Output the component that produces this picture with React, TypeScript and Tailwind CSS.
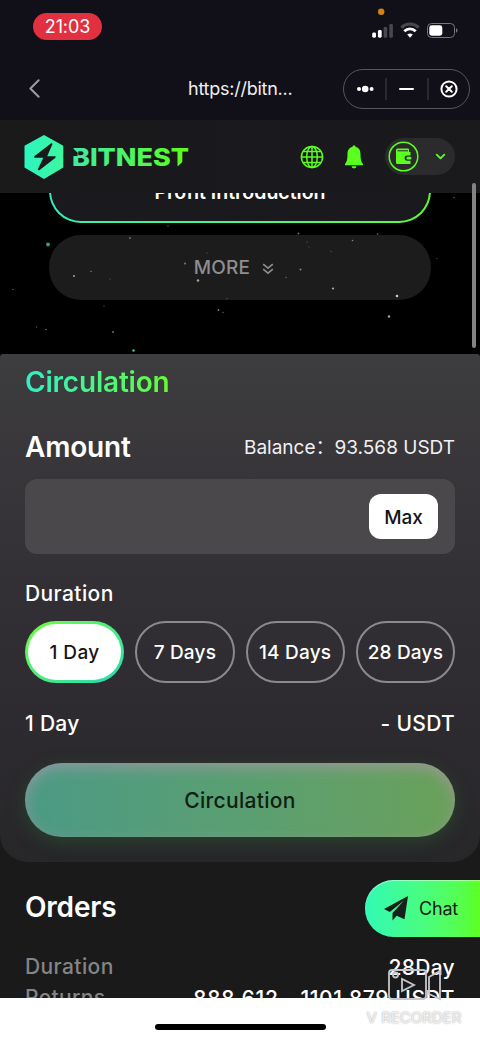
import { ChevronDown, ChevronLeft } from 'lucide-react';

interface Star {
  x: number;
  y: number;
  r: number;
  color: string;
}

// Coordinates are relative to the hero area
const stars: Star[] = [
  { x: 48, y: 50.5, r: 1.9, color: '#2fa866' },
  { x: 133.5, y: 156.5, r: 1.2, color: '#4fc0a8' },
  { x: 130, y: 44, r: 0.9, color: '#777' },
  { x: 168, y: 32, r: 0.8, color: '#555' },
  { x: 298.5, y: 39.5, r: 0.9, color: '#777' },
  { x: 377.5, y: 40, r: 0.8, color: '#777' },
  { x: 352.5, y: 46.5, r: 0.8, color: '#888' },
  { x: 307, y: 48, r: 0.7, color: '#555' },
  { x: 309, y: 53, r: 0.7, color: '#444' },
  { x: 331, y: 57.5, r: 0.7, color: '#555' },
  { x: 207, y: 59, r: 0.7, color: '#555' },
  { x: 185, y: 69.5, r: 0.9, color: '#888' },
  { x: 74, y: 82, r: 1.1, color: '#999' },
  { x: 91, y: 77.5, r: 0.8, color: '#777' },
  { x: 110, y: 85, r: 0.7, color: '#555' },
  { x: 198, y: 86.5, r: 1.2, color: '#aaa' },
  { x: 300.5, y: 75.5, r: 1, color: '#888' },
  { x: 286, y: 83.5, r: 0.8, color: '#666' },
  { x: 333, y: 94.5, r: 1.1, color: '#aaa' },
  { x: 397, y: 102, r: 1.3, color: '#ccc' },
  { x: 389, y: 122.5, r: 1.2, color: '#aaa' },
  { x: 227, y: 104.5, r: 0.7, color: '#555' },
  { x: 218.5, y: 116, r: 0.9, color: '#888' },
  { x: 223, y: 118.5, r: 0.7, color: '#666' },
  { x: 113, y: 138, r: 0.9, color: '#777' },
  { x: 46, y: 135.5, r: 0.7, color: '#888' },
  { x: 36.5, y: 133, r: 0.7, color: '#555' },
  { x: 13, y: 95.5, r: 0.8, color: '#555' },
  { x: 104, y: 112, r: 0.7, color: '#444' },
  { x: 437, y: 64.5, r: 0.7, color: '#444' },
  { x: 454, y: 3.5, r: 0.8, color: '#555' },
];

const durations = ['1 Day', '7 Days', '14 Days', '28 Days'];

const StatusBar = () => (
  <div className="relative flex h-14 shrink-0 items-start justify-between pl-[33px] pr-[22px] pt-[13px]">
    <div className="flex h-[27px] w-[69px] items-center justify-center rounded-full bg-[#e13040] text-[18px] tracking-[-0.1px] text-white">
      21:03
    </div>
    <svg className="absolute left-[371px] top-[7px]" width="90" height="34" viewBox="0 0 90 34">
      <circle cx="10.2" cy="4.7" r="3.2" fill="#d2820f" />
      <rect x="1.2" y="25.5" width="3.8" height="5.2" rx="1.4" fill="#fff" />
      <rect x="6.9" y="23" width="3.8" height="7.7" rx="1.4" fill="#fff" />
      <rect x="12.6" y="20" width="3.6" height="10.7" rx="1.2" fill="#48474d" />
      <rect x="18.3" y="17" width="3.6" height="13.7" rx="1.2" fill="#48474d" />
      <path d="M30.300 20.600a12.500 12.500 0 0 1 17.400 0" fill="none" stroke="#48474d" strokeWidth="3" />
      <path d="M33.300 24.300a8 8 0 0 1 11.400 0" fill="none" stroke="#fff" strokeWidth="2.800" />
      <path d="M36.200 27.600a4.500 4.500 0 0 1 5.600 0l-2.800 3.200z" fill="#fff" />
      <rect x="56.5" y="16.5" width="27" height="14" rx="4" fill="none" stroke="#77767b" />
      <rect x="58.3" y="18.3" width="13" height="10.4" rx="2.4" fill="#fff" />
      <path d="M85 21.300c2 .7 2 3.700 0 4.400z" fill="#77767b" />
    </svg>
  </div>
);

const BrowserBar = () => (
  <div className="flex h-16 shrink-0 items-center pl-[18px] pr-[10px] pt-[1px]">
    <ChevronLeft className="h-[33px] w-[33px] text-[#9a99a0]" strokeWidth={1.5} />
    <span className="ml-[137px] text-[18px] tracking-[-0.25px] text-[#f0f0f2]">https://bitn...</span>
    <div className="ml-auto flex h-10 w-[127px] items-center rounded-full border border-[#57555d]">
      <svg width="125" height="38" viewBox="0 0 125 38">
        <circle cx="15" cy="19" r="2" fill="#fff" />
        <circle cx="21.2" cy="19" r="3.3" fill="#fff" />
        <circle cx="27.6" cy="19" r="2" fill="#fff" />
        <path d="M42 8v22M84 8v22" stroke="#45434b" />
        <path d="M56 19h13" stroke="#fff" strokeWidth="2" strokeLinecap="round" />
        <circle cx="105" cy="19" r="7.6" fill="none" stroke="#fff" strokeWidth="2" />
        <path d="M102.200 16.200l5.600 5.600m0-5.600l-5.600 5.600" stroke="#fff" strokeWidth="2" strokeLinecap="round" />
      </svg>
    </div>
  </div>
);

const Logo = () => (
  <svg width="168" height="46" viewBox="0 0 168 46">
    <defs>
      <linearGradient id="logo" x1="0" y1="0" x2="1" y2="0">
        <stop offset="0" stopColor="#2df5c0" />
        <stop offset="1" stopColor="#3df7a0" />
      </linearGradient>
      <linearGradient id="wordmark" x1="0" y1="0" x2="1" y2="0">
        <stop offset="0" stopColor="#3feaa4" />
        <stop offset="0.5" stopColor="#4df660" />
        <stop offset="1" stopColor="#5bff16" />
      </linearGradient>
    </defs>
    <path d="M20 1l19.300 10.800v21.600L20 45 .5 33.400V11.800z" fill="url(#logo)" />
    <path d="M27.500 9L10.300 22.300v1.500h9L13.700 35.500 15 36.500 31.500 23.800v-1.500h-8.300L28.500 10z" fill="#1a1a1c" />
    <text
      x="48"
      y="31.5"
      textLength="117"
      lengthAdjust="spacingAndGlyphs"
      fill="url(#wordmark)"
      className="text-[24px] font-extrabold"
    >
      BITNEST
    </text>
    {/* angled cuts in the B and the two T stems */}
    <path d="M48 13.500l6.500 6H48zM48 19h5.500v3H48zM82 32l6-5.500V32zM154 32l6-5.500V32z" fill="#19191d" />
  </svg>
);

const AppHeader = () => (
  <header className="flex h-[73px] shrink-0 items-center justify-between bg-gradient-to-r from-[#1a1a1a] via-[#19191e] to-[#1a1a1c] pl-6 pr-[25px]">
    <Logo />
    <div className="flex items-center">
      <svg width="24" height="24" viewBox="0 0 24 24" fill="none" stroke="#5aff1e" strokeWidth="1.500">
        <circle cx="12" cy="12" r="10.600" />
        <ellipse cx="12" cy="12" rx="5.300" ry="10.600" />
        <path d="M12 1.400v21.200M1.400 12h21.200M3.500 6.500h17M3.500 17.500h17" />
      </svg>
      <svg className="ml-[20px]" width="20" height="24" viewBox="0 0 20 24" fill="#5aff1e">
        <path d="M8.500 1.800a1.500 1.500 0 0 1 3 0C15 2.700 16.500 5.500 16.500 9c0 6 .8 8 2.500 10v1.300H1V19c1.700-2 2.500-4 2.500-10 0-3.500 1.500-6.300 5-7.200zM7.500 21.300h5a2.500 2.100 0 0 1-5 0z" />
      </svg>
      <div className="ml-[21px] flex h-[37px] w-[70px] items-center rounded-full bg-[#2b2b2d] pl-[3px]">
        <svg width="31" height="31" viewBox="0 0 31 31">
          <circle cx="15.500" cy="15.500" r="14.300" fill="none" stroke="#5aff1e" strokeWidth="1.500" />
          <path d="M8 9a1.500 1.500 0 0 1 1.500-1.500H20a1 1 0 0 1 1 1V11h1.500v3.500h-3.300a2.600 2.600 0 0 0 0 5.200h3.300V23H9.500A1.500 1.500 0 0 1 8 21.500z" fill="#5aff1e" />
          <path d="M9.500 9.800H20" stroke="#2b2b2d" />
          <rect x="18.500" y="15.700" width="4.900" height="2.900" rx="1.400" fill="#5aff1e" />
        </svg>
        <ChevronDown className="ml-[14px] h-[15px] w-[15px] text-[#5aff1e]" strokeWidth={3} />
      </div>
    </div>
  </header>
);

const Hero = () => (
  <section className="relative h-[161px] shrink-0 overflow-hidden bg-black px-[49px]">
    <div className="-mt-[34px] h-16 rounded-[32px] bg-gradient-to-r from-[#35edb8] to-[#5aff25] p-[2px]">
      <div className="flex h-full items-center justify-center rounded-[30px] bg-[#1a191e] text-[19.5px] font-semibold text-white">
        <span className="mt-[3px]">Profit Introduction</span>
      </div>
    </div>
    <button className="mt-[12px] flex h-[65px] w-full items-center justify-center gap-[12px] rounded-[32px] bg-[#1c1c1d] pr-[12px] pt-[2px] text-[19px] font-medium text-[#8e8e90]">
      <span className="tracking-[0.2px]">MORE</span>
      <svg width="12" height="12" viewBox="0 0 12 12" fill="none" stroke="currentColor" strokeWidth="1.700">
        <path d="M1.200 1.200L6 5.200l4.800-4M1.200 6.200l4.800 4 4.800-4" />
      </svg>
    </button>
    <svg className="absolute left-0 top-[1px]" width="480" height="160">
      {stars.map((star) => (
        <circle key={`${star.x}-${star.y}`} cx={star.x} cy={star.y} r={star.r} fill={star.color} />
      ))}
    </svg>
  </section>
);

const CirculationPanel = () => (
  <section className="flex h-[508px] shrink-0 flex-col rounded-b-[28px] rounded-t-[3px] bg-gradient-to-b from-[#3d3c3e] via-[#322f34] to-[#272629] px-[25px]">
    <h2 className="mt-[10px] h-9 w-[146px] bg-gradient-to-r from-[#35edc5] via-[#48f780] to-[#65fb2b] bg-clip-text text-[28px] font-semibold leading-9 tracking-[-0.2px] text-transparent">
      Circulation
    </h2>
    <div className="mt-[29px] flex h-9 items-center justify-between text-white">
      <span className="text-[28px] font-semibold tracking-[-0.2px]">Amount</span>
      <span className="mt-[3px] text-[19px] text-[#f1f0f3]">Balance：93.568 USDT</span>
    </div>
    <div className="mt-[14px] flex h-[75px] shrink-0 items-center justify-end rounded-[12px] bg-[#4a484b] pr-[17px]">
      <button className="h-[45px] w-[69px] rounded-[12px] bg-white pt-[3px] text-[19px] font-medium text-[#151416]">
        Max
      </button>
    </div>
    <div className="mt-[26px] text-[21px] font-medium leading-7 tracking-[0.4px] text-white">Duration</div>
    <div className="mt-[13px] grid grid-cols-4 gap-[11px]">
      {durations.map((label, i) =>
        i === 0 ? (
          <button key={label} className="h-[62px] rounded-full bg-gradient-to-br from-[#6cff20] to-[#22d9b0] p-[3px]">
            <span className="flex h-full items-center justify-center rounded-full bg-white pt-[2px] text-[19px] font-medium tracking-[0.4px] text-[#151416]">
              {label}
            </span>
          </button>
        ) : (
          <button
            key={label}
            className="h-[62px] whitespace-nowrap rounded-full border-2 border-[#8d8a8f] pt-[2px] text-[19px] font-medium tracking-[0.2px] text-white"
          >
            {label}
          </button>
        )
      )}
    </div>
    <div className="mt-[27px] flex h-7 items-center justify-between text-[21px] font-medium tracking-[0.3px] text-white">
      <span>1 Day</span>
      <span>- USDT</span>
    </div>
    <button className="mt-[25px] h-[74px] shrink-0 rounded-full bg-gradient-to-r from-[#4c9a85] via-[#5a9f72] to-[#6aa05a] pt-[2px] text-[21px] font-medium tracking-[0.3px] text-[#0d2013] shadow-[0_5px_18px_rgba(45,120,55,0.35),inset_0_5px_14px_rgba(180,150,175,0.6)]">
      Circulation
    </button>
  </section>
);

const Orders = () => (
  <section className="h-[136px] shrink-0 overflow-hidden px-[25px] text-[21px] font-medium">
    <h2 className="mt-[27px] text-[28px] font-semibold leading-9 tracking-[-0.2px] text-white">Orders</h2>
    <div className="mt-[26px] flex h-[31px] items-center justify-between">
      <span className="tracking-[0.4px] text-[#858587]">Duration</span>
      <span className="mt-[2px] tracking-[0.3px] text-white">28Day</span>
    </div>
    <div className="flex h-[31px] items-center justify-between">
      <span className="tracking-[0.4px] text-[#858587]">Returns</span>
      <span className="mt-[2px] flex gap-[6px] text-white">
        <span className="tracking-[0.8px]">888.612</span>
        <span>-</span>
        <span className="tracking-[0.6px]">1101.879 USDT</span>
      </span>
    </div>
  </section>
);

const ChatButton = () => (
  <button className="absolute left-[365px] top-[880px] flex h-[57px] w-[115px] items-center rounded-l-full bg-gradient-to-r from-[#32fab4] to-[#5cff1c] pl-[19px] text-[18px] text-[#17201a] shadow-[inset_0_1px_1px_rgba(255,255,255,0.5)]">
    <svg width="24" height="25" viewBox="0 0 24 25" fill="#17201a">
      <path d="M24 0L0 13l5.800 3L20 4.500 8.500 17v7.500l4.200-4.700 7.800 3.400z" />
    </svg>
    <span className="ml-[11px] tracking-[-0.2px]">Chat</span>
  </button>
);

const Watermark = () => (
  <div className="absolute left-[364px] top-[967px] flex w-[100px] flex-col items-center">
    <svg width="54" height="34" viewBox="0 0 54 34" fill="none" stroke="#c7c6ca" strokeWidth="1.800">
      <rect x="2" y="3" width="37" height="29" rx="3" />
      <circle cx="8.500" cy="8" r="2.500" />
      <path d="M15 12v12l12-6zM42 10l11-6v28l-11-5z" />
    </svg>
    <span className="mt-[7px] whitespace-nowrap text-[15px] leading-5 text-[#f0f0f1] [text-shadow:0_0_2px_#999]">
      V RECORDER
    </span>
  </div>
);

const App = () => {
  return (
    <div className="relative flex h-[1040px] w-[480px] flex-col overflow-hidden bg-[#110f17] font-['Inter','Noto_Sans_CJK_SC',sans-serif]">
      <StatusBar />
      <BrowserBar />
      <AppHeader />
      <main className="flex h-[805px] shrink-0 flex-col bg-gradient-to-b from-black from-[21%] to-[#1a1a1b] to-[21%]">
        <Hero />
        <CirculationPanel />
        <Orders />
      </main>
      <footer className="flex h-[42px] shrink-0 justify-center bg-white pt-[26px]">
        <div className="h-[6px] w-[171px] rounded-full bg-black" />
      </footer>
      <div className="absolute left-[472px] top-[183px] h-[165px] w-1 rounded-full bg-[#838385]" />
      <ChatButton />
      <Watermark />
    </div>
  );
};

export default App;
